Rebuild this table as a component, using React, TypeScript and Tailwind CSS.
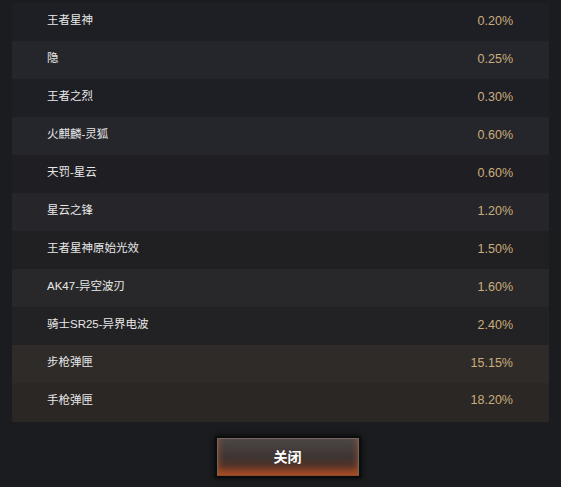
const rows = [
  { name: "王者星神", rate: "0.20%", bg: "bg-[#1e1f24]" },
  { name: "隐", rate: "0.25%", bg: "bg-[#25262c]" },
  { name: "王者之烈", rate: "0.30%", bg: "bg-[#1e1f24]" },
  { name: "火麒麟-灵狐", rate: "0.60%", bg: "bg-[#25262b]" },
  { name: "天罚-星云", rate: "0.60%", bg: "bg-[#1f1f23]" },
  { name: "星云之锋", rate: "1.20%", bg: "bg-[#26262a]" },
  { name: "王者星神原始光效", rate: "1.50%", bg: "bg-[#202023]" },
  { name: "AK47-异空波刃", rate: "1.60%", bg: "bg-[#28282a]" },
  { name: "骑士SR25-异界电波", rate: "2.40%", bg: "bg-[#222123]" },
  { name: "步枪弹匣", rate: "15.15%", bg: "bg-[#2f2b28]" },
  { name: "手枪弹匣", rate: "18.20%", bg: "bg-[#2a2724]" },
];

const font = { fontFamily: '"Liberation Sans", "Noto Sans CJK SC", sans-serif' };

export default function App() {
  return (
    <div className="w-[561px] h-[487px] bg-[#1b1c1f] overflow-hidden" style={font}>
      <div className="pt-[3px] pl-[12px] pr-[12px]">
        <div className="flex flex-col">
          {rows.map((r, i) => (
            <div
              key={r.name}
              className={`${r.bg} flex items-center justify-between pl-[35px] pr-[36px] ${
                i === rows.length - 1 ? "h-[39px] pb-[4px]" : "h-[38px] pb-[2px]"
              }`}
            >
              <span className="text-[11.5px] text-[#e8e8e8]">{r.name}</span>
              <span className="text-[12.5px] text-[#cbad7c]">{r.rate}</span>
            </div>
          ))}
        </div>
      </div>

      <div className="flex justify-center mt-[14px]">
        <div className="ml-[14px] w-[146px] h-[42px] p-[2px] bg-[#0c0c0d] shadow-[0_0_6px_rgba(0,0,0,0.8)]">
          <button className="w-full h-full border border-[#6e6663] border-b-[#8a4a30] bg-gradient-to-b from-[#4b4645] via-[#3e3533] to-[#5e2d1a] shadow-[inset_0_-5px_7px_rgba(235,105,45,0.55)] flex items-center justify-center text-white text-[14px] font-bold">
            关闭
          </button>
        </div>
      </div>
    </div>
  );
}
